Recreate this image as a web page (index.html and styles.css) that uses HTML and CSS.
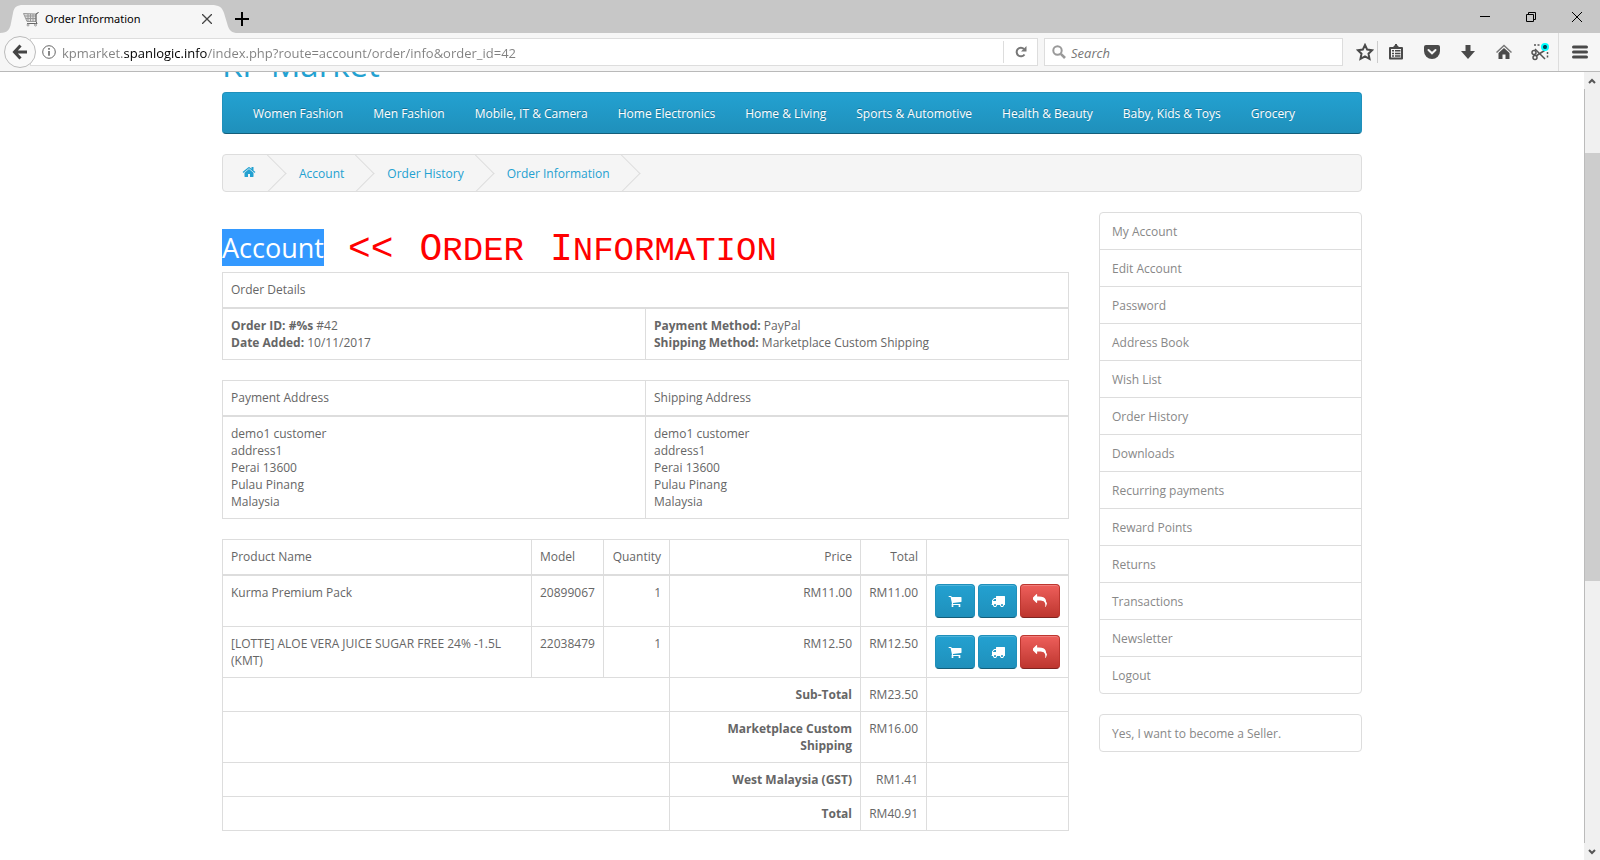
FILE: index.html
```
<!DOCTYPE html>
<html lang="en">
<head>
    <meta charset="UTF-8">
    <meta name="viewport" content="width=device-width, initial-scale=1.0">
    <title>Order Information</title>
    <link rel="stylesheet" href="styles.css">
</head>
<body>
    <!-- icons used more than once -->
    <svg class="sprite" aria-hidden="true">
        <symbol id="cart" viewBox="0 0 1792 1792"><path d="M704 1536q0 52-38 90t-90 38-90-38-38-90 38-90 90-38 90 38 38 90zm896 0q0 52-38 90t-90 38-90-38-38-90 38-90 90-38 90 38 38 90zm128-1088v512q0 24-16.5 42.5t-40.5 21.5l-1044 122q13 60 13 70 0 16-24 64h920q26 0 45 19t19 45-19 45-45 19h-1024q-26 0-45-19t-19-45q0-11 8-31.5t16-36 21.5-40 15.5-29.5l-177-823h-204q-26 0-45-19t-19-45 19-45 45-19h256q16 0 28.5 6.5t19.5 15.5 13 24.5 8 26 5.5 29.5 4.5 26h1201q26 0 45 19t19 45z"/></symbol>
        <symbol id="truck" viewBox="0 0 1792 1792"><path d="M640 1408q0-52-38-90t-90-38-90 38-38 90 38 90 90 38 90-38 38-90zm-384-512h384v-256h-158q-13 0-22 9l-195 195q-9 9-9 22v30zm1280 512q0-52-38-90t-90-38-90 38-38 90 38 90 90 38 90-38 38-90zm256-1088v1024q0 15-4 26.5t-13.5 18.5-16.5 11.5-23.5 6-22.5 2-25.5 0-22.5-.5q0 106-75 181t-181 75-181-75-75-181h-384q0 106-75 181t-181 75-181-75-75-181h-64q-3 0-22.5.5t-25.5 0-22.5-2-23.5-6-16.5-11.5-13.5-18.5-4-26.5q0-26 19-45t45-19v-320q0-8-.5-35t0-38 2.5-34.5 6.5-37 14-30.5 22.5-30l198-198q19-19 50.5-32t58.5-13h160v-192q0-26 19-45t45-19h1024q26 0 45 19t19 45z"/></symbol>
        <symbol id="reply" viewBox="0 0 1792 1792"><path d="M1792 1120q0 166-127 451-3 7-10.5 24t-13.5 30-13 22q-12 17-28 17-15 0-23.5-10t-8.5-25q0-9 2.5-26.5t2.5-23.5q5-68 5-123 0-112-19.5-200.5t-54-153.5-89-112-117.5-79.5-152-46.5-179-23.5-212.5-6.5h-224v256q0 26-19 45t-45 19-45-19l-512-512q-19-19-19-45t19-45l512-512q19-19 45-19t45 19 19 45v256h224q713 0 875 403 53 134 53 333z"/></symbol>
    </svg>

    <div class="tabbar">
        <div class="tab">
            <svg class="tab-shape" viewBox="0 0 238 28" width="238" height="28"><path fill="#f6f6f6" d="M0 28C8 28 10 24 11 18L13 8C14 2 17 0 23 0H211C219 0 222 2 224 8L227 18C229 26 232 28 238 28Z"/></svg>
            <svg class="favicon" viewBox="0 0 16 16" width="16" height="16" fill="none" stroke="#999"><path fill="#ddd" d="M15.500 1.500L13 3 13 10.500H4L.500 2.500 13 3"/><path d="M13 10.500L14 12.500H4M2 5H13M3 7.500H13M5 3V10M7.500 3V10M10 3V10"/><path stroke="#666" d="M15.500 1.500L13 3 13 10.500 14 12.500H4"/><circle cx="5" cy="14" r="1"/><circle cx="12.500" cy="14" r="1"/></svg>
            <span class="tab-title">Order Information</span>
            <button class="icon-btn tab-close" aria-label="Close tab"><svg viewBox="0 0 10 10" width="10" height="10" stroke="#444" stroke-width="1.300"><path d="M0 0L10 10M10 0L0 10"/></svg></button>
        </div>
        <button class="icon-btn new-tab" aria-label="New tab"><svg viewBox="0 0 14 14" width="14" height="14" stroke="#000" stroke-width="2"><path d="M7 0V14M0 7H14"/></svg></button>
        <div class="window-controls">
            <button class="icon-btn" aria-label="Minimize"><svg viewBox="0 0 10 10" width="10" height="10" stroke="#000"><path d="M0 4.500H10"/></svg></button>
            <button class="icon-btn" aria-label="Restore"><svg viewBox="0 0 10 10" width="10" height="10" stroke="#000" fill="none"><path d="M.500 2.500H7.500V9.500H.500ZM2.500 2.500V.500H9.500V7.500H7.500"/></svg></button>
            <button class="icon-btn" aria-label="Close"><svg viewBox="0 0 10 10" width="10" height="10" stroke="#000"><path d="M0 0L10 10M10 0L0 10"/></svg></button>
        </div>
    </div>

    <div class="toolbar">
        <button class="icon-btn back" aria-label="Back"><svg viewBox="0 0 16 16" width="16" height="16" fill="none" stroke="#444" stroke-width="3"><path d="M8.500 1.500L2.500 8 8.500 14.500M3 8H15"/></svg></button>
        <div class="urlbar">
            <svg viewBox="0 0 14 14" width="14" height="14" fill="none" stroke="#666"><circle cx="7" cy="7" r="6.300"/><path stroke-width="1.600" d="M7 6V10.800M7 3V4.800"/></svg>
            <input class="url" type="text" aria-label="Address" value="kpmarket.spanlogic.info/index.php?route=account/order/info&amp;order_id=42">
            <button class="icon-btn reload" aria-label="Reload"><svg viewBox="0 0 12 12" width="12" height="12" fill="none" stroke="#777" stroke-width="2"><path d="M9.500 8.500A4.300 4.300 0 1 1 9 3"/><path fill="#777" stroke="none" d="M11.500 0V5.500H6Z"/></svg></button>
        </div>
        <div class="searchbar">
            <svg viewBox="0 0 14 14" width="14" height="14" fill="none" stroke="#999" stroke-width="2"><circle cx="5.500" cy="5.500" r="4.200"/><path stroke-width="2.600" d="M8.800 8.800L13 13"/></svg>
            <input class="search" type="search" aria-label="Search" placeholder="Search">
        </div>
        <div class="tools">
            <button class="icon-btn star" aria-label="Bookmark"><svg viewBox="0 0 18 18" width="18" height="18" fill="none" stroke="#4a4a4a" stroke-width="2"><path d="M9 2L11.200 6.600 16.200 7.200 12.500 10.700 13.500 15.800 9 13.300 4.500 15.800 5.500 10.700 1.800 7.200 6.800 6.600Z"/></svg></button>
            <button class="icon-btn" aria-label="Bookmarks list"><svg viewBox="0 0 16 16" width="16" height="16"><path fill="none" stroke="#4a4a4a" stroke-width="2" stroke-linejoin="round" d="M2 4H14V14.500H2Z"/><path fill="#4a4a4a" d="M4 4L7 1V0H9V1L12 4ZM4 6H6V7.500H4ZM7 6H12.500V7.500H7ZM4 8.700H6V10.200H4ZM7 8.700H12.500V10.200H7ZM4 11.300H6V12.800H4ZM7 11.300H12.500V12.800H7Z"/></svg></button>
            <button class="icon-btn" aria-label="Pocket"><svg viewBox="0 0 16 16" width="16" height="16"><path fill="#4a4a4a" d="M2 1H14Q16 1 16 3V7A8 8 0 0 1 0 7V3Q0 1 2 1Z"/><path fill="none" stroke="#f6f6f6" stroke-width="2" stroke-linecap="round" d="M4.500 6L8 9.300 11.500 6"/></svg></button>
            <button class="icon-btn" aria-label="Downloads"><svg viewBox="0 0 16 16" width="16" height="16" fill="#4a4a4a"><path d="M5.500 1H10.500V7H15L8 15 1 7H5.500Z"/></svg></button>
            <button class="icon-btn" aria-label="Home"><svg viewBox="0 0 16 16" width="16" height="16"><path fill="none" stroke="#777" stroke-width="1.500" d="M.500 8.500L8 1.500 15.500 8.500"/><path fill="#4a4a4a" d="M8 4L13.500 9V15H9.500V10.500H6.500V15H2.500V9Z"/></svg></button>
            <button class="icon-btn" aria-label="Screenshot"><svg viewBox="0 0 18 18" width="18" height="18" fill="none" stroke="#555" stroke-width="1.500"><path stroke-dasharray="2 1.500" d="M3 2H10M16.500 9V16"/><path d="M4 6L14 16M13.500 7.500L5 13"/><circle cx="3" cy="9.500" r="2"/><circle cx="4" cy="14.500" r="2"/><circle cx="14" cy="4" r="4" fill="#0ff" stroke="none"/><path stroke="#045" d="M14 2V6M12.200 3L15.800 5M15.800 3L12.200 5"/></svg></button>
        </div>
        <button class="icon-btn menu" aria-label="Menu"><svg viewBox="0 0 16 14" width="16" height="14" stroke="#4a4a4a" stroke-width="3" stroke-linecap="round"><path d="M1.500 2H14.500M1.500 7H14.500M1.500 12H14.500"/></svg></button>
    </div>

    <div class="viewport">
        <div class="page">
            <div class="container">
                <header class="header"><a class="logo" href="#">KP Market</a></header>
                <nav class="navbar">
                    <a href="#">Women Fashion</a>
                    <a href="#">Men Fashion</a>
                    <a href="#">Mobile, IT &amp; Camera</a>
                    <a href="#">Home Electronics</a>
                    <a href="#">Home &amp; Living</a>
                    <a href="#">Sports &amp; Automotive</a>
                    <a href="#">Health &amp; Beauty</a>
                    <a href="#">Baby, Kids &amp; Toys</a>
                    <a href="#">Grocery</a>
                </nav>
                <ul class="breadcrumb">
                    <li><a href="#" aria-label="Home"><svg viewBox="0 0 1792 1792" width="14" height="14" fill="currentColor"><path d="M1472 992v480q0 26-19 45t-45 19h-384v-384h-256v384h-384q-26 0-45-19t-19-45v-480q0-1 .5-3t.5-3l575-474 575 474q1 2 1 6zm223-69l-62 74q-8 9-21 11h-3q-13 0-21-7l-692-577-692 577q-12 8-24 7-13-2-21-11l-62-74q-8-10-7-23.500t11-21.500l719-599q32-26 76-26t76 26l244 204v-195q0-14 9-23t23-9h192q14 0 23 9t9 23v408l219 182q10 8 11 21.500t-7 23.500z"/></svg></a></li>
                    <li><a href="#">Account</a></li>
                    <li><a href="#">Order History</a></li>
                    <li><a href="#">Order Information</a></li>
                </ul>

                <div class="row">
                    <main class="content">
                        <div class="title-row">
                            <h2><span class="selected">Account</span></h2>
                            <p class="note"><span>&lt;&lt;</span><span class="word">Order</span><span class="word">Information</span></p>
                        </div>

                        <table class="table">
                            <thead>
                                <tr><td colspan="2">Order Details</td></tr>
                            </thead>
                            <tbody>
                                <tr>
                                    <td class="half"><b>Order ID: #%s</b> #42<br><b>Date Added:</b> 10/11/2017</td>
                                    <td class="half"><b>Payment Method:</b> PayPal<br><b>Shipping Method:</b> Marketplace Custom Shipping</td>
                                </tr>
                            </tbody>
                        </table>

                        <table class="table">
                            <thead>
                                <tr><td class="half">Payment Address</td><td class="half">Shipping Address</td></tr>
                            </thead>
                            <tbody>
                                <tr>
                                    <td>demo1 customer<br>address1<br>Perai 13600<br>Pulau Pinang<br>Malaysia</td>
                                    <td>demo1 customer<br>address1<br>Perai 13600<br>Pulau Pinang<br>Malaysia</td>
                                </tr>
                            </tbody>
                        </table>

                        <table class="table products">
                            <colgroup>
                                <col>
                                <col class="col-model">
                                <col class="col-amount">
                                <col class="col-price">
                                <col class="col-amount">
                                <col class="col-actions">
                            </colgroup>
                            <thead>
                                <tr>
                                    <td>Product Name</td>
                                    <td>Model</td>
                                    <td class="right">Quantity</td>
                                    <td class="right">Price</td>
                                    <td class="right">Total</td>
                                    <td></td>
                                </tr>
                            </thead>
                            <tbody>
                                <tr>
                                    <td>Kurma Premium Pack</td>
                                    <td>20899067</td>
                                    <td class="right">1</td>
                                    <td class="right">RM11.00</td>
                                    <td class="right">RM11.00</td>
                                    <td>
                                        <div class="actions">
                                            <button class="btn" aria-label="Reorder"><svg><use href="#cart"/></svg></button>
                                            <button class="btn" aria-label="Track"><svg><use href="#truck"/></svg></button>
                                            <button class="btn danger" aria-label="Return"><svg><use href="#reply"/></svg></button>
                                        </div>
                                    </td>
                                </tr>
                                <tr>
                                    <td>[LOTTE] ALOE VERA JUICE SUGAR FREE 24% -1.5L (KMT)</td>
                                    <td>22038479</td>
                                    <td class="right">1</td>
                                    <td class="right">RM12.50</td>
                                    <td class="right">RM12.50</td>
                                    <td>
                                        <div class="actions">
                                            <button class="btn" aria-label="Reorder"><svg><use href="#cart"/></svg></button>
                                            <button class="btn" aria-label="Track"><svg><use href="#truck"/></svg></button>
                                            <button class="btn danger" aria-label="Return"><svg><use href="#reply"/></svg></button>
                                        </div>
                                    </td>
                                </tr>
                            </tbody>
                            <tfoot>
                                <tr><td colspan="3"></td><td class="right"><b>Sub-Total</b></td><td class="right">RM23.50</td><td></td></tr>
                                <tr><td colspan="3"></td><td class="right"><b>Marketplace Custom Shipping</b></td><td class="right">RM16.00</td><td></td></tr>
                                <tr><td colspan="3"></td><td class="right"><b>West Malaysia (GST)</b></td><td class="right">RM1.41</td><td></td></tr>
                                <tr><td colspan="3"></td><td class="right"><b>Total</b></td><td class="right">RM40.91</td><td></td></tr>
                            </tfoot>
                        </table>
                    </main>

                    <aside class="sidebar">
                        <div class="list-group">
                            <a href="#">My Account</a>
                            <a href="#">Edit Account</a>
                            <a href="#">Password</a>
                            <a href="#">Address Book</a>
                            <a href="#">Wish List</a>
                            <a href="#">Order History</a>
                            <a href="#">Downloads</a>
                            <a href="#">Recurring payments</a>
                            <a href="#">Reward Points</a>
                            <a href="#">Returns</a>
                            <a href="#">Transactions</a>
                            <a href="#">Newsletter</a>
                            <a href="#">Logout</a>
                        </div>
                        <div class="list-group">
                            <a href="#">Yes, I want to become a Seller.</a>
                        </div>
                    </aside>
                </div>
            </div>
        </div>
        <div class="scrollbar">
            <span class="arrow"><svg viewBox="0 0 8 6" width="8" height="6" fill="none" stroke="#555" stroke-width="2"><path d="M1 5L4 2 7 5"/></svg></span>
            <div class="track">
                <div class="thumb"></div>
            </div>
            <span class="arrow"><svg viewBox="0 0 8 6" width="8" height="6" fill="none" stroke="#555" stroke-width="2"><path d="M1 1L4 4 7 1"/></svg></span>
        </div>
    </div>
</body>
</html>
```
FILE: styles.css
```
* {
    box-sizing: border-box;
}

body {
    margin: 0;
    height: 100vh;
    display: flex;
    flex-direction: column;
    overflow: hidden;
    background: #fff;
    color: #666;
    font-family: "Open Sans", sans-serif;
    font-size: 12px;
    line-height: 17px;
}

a {
    color: #23a1d1;
    text-decoration: none;
}

.sprite {
    position: absolute;
    width: 0;
    height: 0;
}

/* Browser window */
.icon-btn {
    display: flex;
    align-items: center;
    justify-content: center;
    flex: none;
    padding: 0;
    border: 0;
    background: none;
}

.tabbar {
    display: flex;
    height: 33px;
    background: #c7c7c7;
}

.tab {
    position: relative;
    display: flex;
    align-items: center;
    width: 226px;
    height: 28px;
    margin-top: 5px;
    padding: 0 12px 1px 23px;
    gap: 6px;
    color: #000;
}

.tab-shape {
    position: absolute;
    left: 0;
    top: 0;
}

.favicon,
.tab-title,
.tab-close {
    position: relative;
}

.tab-title {
    flex: 1;
    font-family: "Noto Sans", sans-serif;
    font-size: 11px;
}

.tab-close {
    width: 14px;
    height: 14px;
}

.new-tab {
    width: 32px;
    padding-top: 4px;
}

.window-controls {
    display: flex;
    margin-left: auto;
}

.window-controls .icon-btn {
    width: 46px;
}

.toolbar {
    display: flex;
    align-items: center;
    height: 39px;
    border-bottom: 1px solid #b9b9b9;
    background: #f6f6f6;
}

.back {
    z-index: 1;
    width: 32px;
    height: 32px;
    margin-left: 4px;
    border: 1px solid #bbb;
    border-radius: 50%;
    background: #f9f9f9;
}

.urlbar,
.searchbar {
    display: flex;
    align-items: center;
    height: 28px;
    border: 1px solid #ddd;
    background: #fff;
}

.urlbar {
    flex: 1;
    margin: 0 6px 0 -6px;
    padding-left: 11px;
    gap: 6px;
}

.url,
.search {
    flex: 1;
    min-width: 0;
    padding: 2px 0 0;
    border: 0;
    outline: 0;
    background: none;
    font-family: "Open Sans", sans-serif;
    font-size: 13px;
    color: #777;
}

/* the domain is darker than the rest of the address */
.url {
    color: transparent;
    background: linear-gradient(90deg, #808080 61px, #000 61px, #000 145px, #808080 145px);
    -webkit-background-clip: text;
    background-clip: text;
}

.reload {
    width: 34px;
    height: 22px;
    border-left: 1px solid #ddd;
}

.searchbar {
    width: 299px;
    padding-left: 7px;
    gap: 5px;
}

.search::placeholder {
    color: #777;
    font-style: italic;
}

.tools {
    display: flex;
    padding-left: 9px;
}

.tools .icon-btn {
    width: 36px;
    height: 22px;
}

.tools .star {
    width: 26px;
    border-right: 1px solid #ccc;
}

.menu {
    width: 42px;
    height: 38px;
    border-left: 1px solid #ddd;
}

/* Page */
.viewport {
    display: flex;
    flex: 1;
    min-height: 0;
}

.page {
    flex: 1;
    overflow: hidden;
}

.container {
    max-width: 1170px;
    margin: 0 auto;
    padding: 0 15px;
}

.header {
    display: flex;
    align-items: flex-end;
    height: 20px;
    overflow: hidden;
}

.logo {
    flex: none;
    padding-bottom: 9px;
    font-size: 33px;
    line-height: 36px;
}

.navbar {
    display: flex;
    padding: 0 15px;
    margin-bottom: 20px;
    border: 1px solid #1f90bb;
    border-bottom-color: #145e7a;
    border-radius: 4px;
    background: linear-gradient(#23a1d1, #1f90bb);
}

.navbar a {
    padding: 11px 15px 9px;
    color: #fff;
    line-height: 20px;
    text-shadow: 0 -1px 0 rgba(0, 0, 0, 0.25);
}

.breadcrumb {
    display: flex;
    gap: 3px;
    margin: 0 0 20px;
    padding: 9px 0 7px;
    border: 1px solid #ddd;
    border-radius: 4px;
    background: #f5f5f5;
    list-style: none;
    overflow: hidden;
}

.breadcrumb li {
    position: relative;
    padding: 0 20px;
    line-height: 20px;
}

.breadcrumb li:first-child {
    padding-left: 19px;
}

.breadcrumb svg {
    display: block;
    margin-top: 1px;
}

.breadcrumb li::after {
    content: "";
    position: absolute;
    top: -4px;
    right: -5px;
    width: 26px;
    height: 26px;
    border-right: 1px solid #ddd;
    border-bottom: 1px solid #ddd;
    transform: rotate(-45deg);
}

.row {
    display: flex;
    gap: 30px;
}

.content {
    flex: 1;
    min-width: 0;
}

.title-row {
    display: flex;
    align-items: center;
    gap: 24px;
    height: 37px;
    margin: 17px 0 6px;
}

h2 {
    margin: 0;
    font-size: 27px;
    font-weight: 400;
    line-height: 37px;
}

.selected {
    display: block;
    background: #3399ff;
    color: #fff;
}

.note {
    display: flex;
    align-items: baseline;
    gap: 26px;
    margin: 0;
    padding-top: 6px;
    color: #f00;
    font-family: "Liberation Mono", monospace;
    font-size: 38px;
    line-height: 37px;
}

.word {
    display: block;
    font-size: 34px;
    text-transform: uppercase;
}

.word::first-letter {
    font-size: 38px;
}

.table {
    width: 100%;
    margin-bottom: 20px;
    border: 1px solid #ddd;
    border-collapse: collapse;
}

.table td {
    padding: 8px;
    border: 1px solid #ddd;
    vertical-align: top;
}

.table thead td {
    padding-bottom: 9px;
    border-bottom-width: 2px;
}

.half {
    width: 50%;
}

.right {
    text-align: right;
}

.products {
    table-layout: fixed;
}

.col-model {
    width: 72px;
}

.col-amount {
    width: 66px;
}

.col-price {
    width: 191px;
}

.col-actions {
    width: 142px;
}

.actions {
    display: flex;
    gap: 3px;
}

.btn {
    display: flex;
    align-items: center;
    justify-content: center;
    flex: 1;
    height: 34px;
    padding: 0;
    border: 1px solid #1f90bb;
    border-bottom-color: #145e7a;
    border-radius: 4px;
    background: linear-gradient(#23a1d1, #1f90bb);
    box-shadow: inset 0 1px 0 rgba(255, 255, 255, 0.2);
}

.btn svg {
    width: 14px;
    height: 14px;
    fill: #fff;
}

.btn.danger {
    border-color: #bd362f;
    border-bottom-color: #802420;
    background: linear-gradient(#ee5f5b, #bd362f);
}

.sidebar {
    width: 263px;
}

.list-group {
    margin-bottom: 20px;
    border: 1px solid #ddd;
    border-radius: 4px;
}

.list-group a {
    display: block;
    padding: 10px 12px 9px;
    color: #888;
}

.list-group a + a {
    border-top: 1px solid #ddd;
}

.scrollbar {
    display: flex;
    flex-direction: column;
    width: 16px;
    background: #f0f0f0;
}

.arrow {
    display: flex;
    align-items: center;
    justify-content: center;
    height: 17px;
}

.track {
    flex: 1;
    padding-top: 64px;
    border-left: 1px solid #bbb;
}

.thumb {
    height: 62%;
    background: #cdcdcd;
}
```
